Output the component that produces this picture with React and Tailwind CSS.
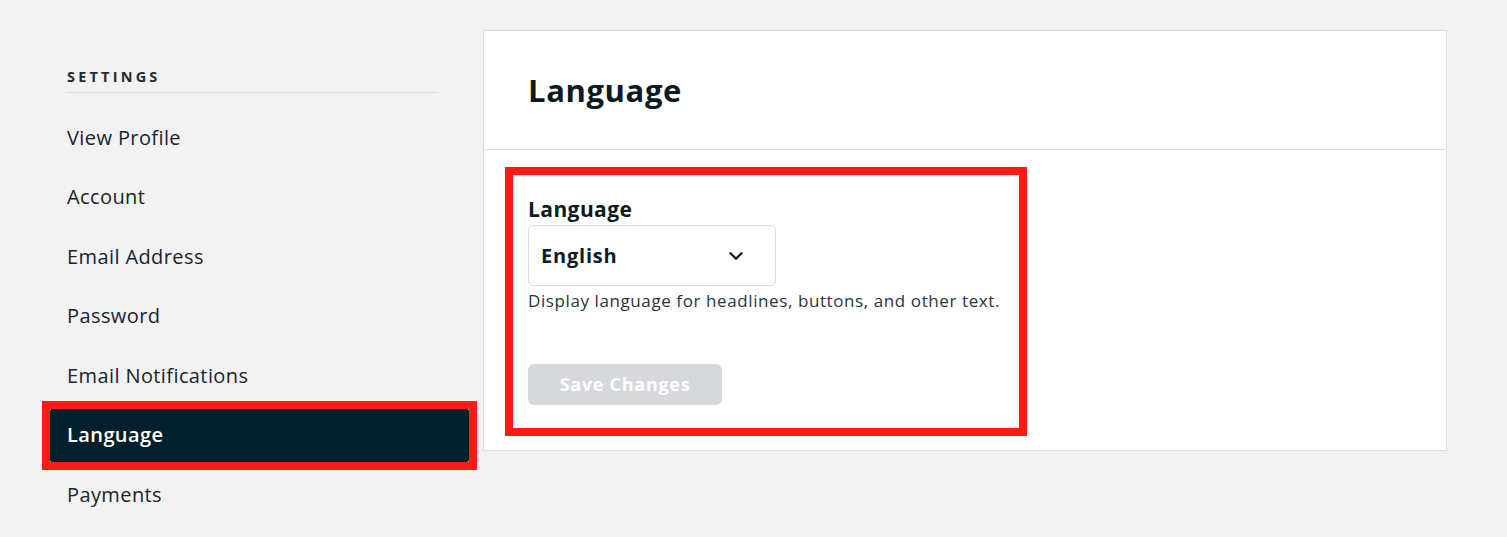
import { ChevronDown } from "lucide-react";

const items = ["View Profile", "Account", "Email Address", "Password", "Email Notifications", "Language", "Payments"];

function Sidebar() {
  return (
    <aside className="w-[483px] shrink-0 pl-[67px] pt-[34px]">
      <div className="w-[370px] border-b border-[#d9dadc] pb-[4px]">
        <span className="text-[14.5px] font-bold tracking-[0.22em] text-[#1f2b33] leading-[20px]">SETTINGS</span>
      </div>
      <nav className="mt-[15px] flex flex-col tracking-[0.025em]">
        {items.map((item) =>
          item === "Language" ? (
            <div
              key={item}
              className="-ml-[25px] -my-[4.75px] h-[69px] w-[435px] border-[8px] border-[#ff1b14]"
            >
              <div className="h-full bg-[#021f2c] rounded-[2px] pl-[17px] flex items-center text-[20px] text-white font-semibold">
                {item}
              </div>
            </div>
          ) : (
            <div key={item} className="h-[59.5px] flex items-center text-[20px] text-[#16252e]">
              {item}
            </div>
          )
        )}
      </nav>
    </aside>
  );
}

export default function App() {
  return (
    <div
      className="min-h-[537px] w-[1507px] bg-[#f2f2f2] flex items-start pt-[30px]"
      style={{ fontFamily: '"Open Sans", "Liberation Sans", sans-serif' }}
    >
      <Sidebar />
      <main className="w-[964px] h-[421px] bg-white border border-[#dcdcdf] flex flex-col">
        <header className="h-[119px] border-b border-[#dcdcdf] pl-[44px] flex items-center">
          <h1 className="text-[31px] font-bold tracking-[0.02em] text-[#0a1b24]">Language</h1>
        </header>
        <div className="pl-[21px] pt-[17px]">
          <div className="w-[522px] h-[269px] border-[8px] border-[#ff1b14] pl-[15px] pt-[21px]">
            <label className="block text-[21px] font-bold tracking-[0.02em] text-[#0a1b24] leading-[26px]">Language</label>
            <div className="mt-[3px] w-[248px] h-[61px] border border-[#d9d9dc] rounded-[5px] pl-[12px] pr-[28px] flex items-center justify-between">
              <span className="text-[20px] font-bold tracking-[0.04em] text-[#0a1b24]">English</span>
              <ChevronDown size={22} strokeWidth={2.5} className="text-[#0a1b24]" />
            </div>
            <p className="mt-[5px] text-[17px] tracking-[0.035em] text-[#2b343a] leading-[20px]">
              Display language for headlines, buttons, and other text.
            </p>
            <button
              type="button"
              disabled
              className="mt-[53px] w-[194px] h-[41px] rounded-[6px] bg-[#d7d8db] text-white text-[18px] font-bold tracking-[0.04em]"
            >
              Save Changes
            </button>
          </div>
        </div>
      </main>
    </div>
  );
}
